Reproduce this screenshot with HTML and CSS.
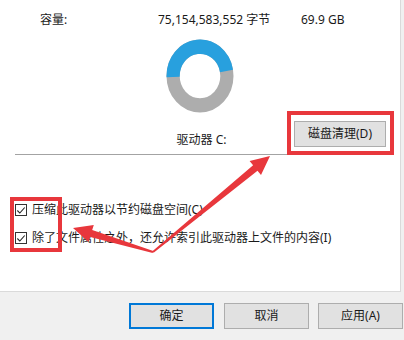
FILE: index.html
```html
<!DOCTYPE html>
<html lang="zh-CN">
<head>
<meta charset="utf-8">
<link rel="stylesheet" href="styles.css">
</head>
<body>
<div class="page">
  <div class="panel">
    <div class="cap">
      <span class="cap-label">容量:</span>
      <span class="cap-bytes">75,154,583,552 字节</span>
      <span class="cap-gb">69.9 GB</span>
    </div>
    <div class="donut">
      <svg width="68" height="74" viewBox="0 0 68 74">
        <g transform="translate(34,37) scale(1,1.09)">
          <circle cx="0" cy="0" r="26.9" fill="none" stroke="#adadad" stroke-width="13.2"/>
          <path d="M -26.88 0.94 A 26.9 26.9 0 0 1 26.49 -4.67" fill="none" stroke="#28a0de" stroke-width="13.2"/>
        </g>
      </svg>
    </div>
    <div class="drive">
      <span class="drive-label">驱动器 C:</span>
      <button class="btn clean">磁盘清理(D)</button>
    </div>
    <div class="sep"></div>
    <div class="checks">
      <label class="check"><span class="box"><svg width="11" height="11" viewBox="0 0 11 11"><path d="M1.5 5.5 L4.2 8.3 L9.6 2.2" fill="none" stroke="#222" stroke-width="1.2"/></svg></span>压缩此驱动器以节约磁盘空间(C)</label>
      <label class="check"><span class="box"><svg width="11" height="11" viewBox="0 0 11 11"><path d="M1.5 5.5 L4.2 8.3 L9.6 2.2" fill="none" stroke="#222" stroke-width="1.2"/></svg></span>除了文件属性之外，还允许索引此驱动器上文件的内容(I)</label>
    </div>
  </div>
  <div class="footer">
    <button class="btn ok">确定</button>
    <button class="btn">取消</button>
    <button class="btn">应用(A)</button>
  </div>

  <div class="mark mark-clean"></div>
  <div class="mark mark-checks"></div>
  <svg class="arrows" width="404" height="340" viewBox="0 0 404 340">
    <polygon fill="#e8373c" points="153.6,252.8 257.5,170.7 261.0,175.0 270,156 249.6,161.0 253.1,165.3 152.4,251.2"/>
    <polygon fill="#e8373c" points="153.3,251.0 92.2,230.1 93.8,224.9 73,228 88.6,242.1 90.2,236.9 152.7,253.0"/>
  </svg>
</div>
</body>
</html>
```
FILE: styles.css
```css
* { box-sizing: border-box; }
html, body {
  margin: 0;
  padding: 0;
  width: 404px;
  height: 340px;
  overflow: hidden;
  background: #f0f0f0;
  font-family: "Noto Sans", "Noto Sans CJK SC", sans-serif;
  font-size: 12px;
  color: #1a1a1a;
}
.page {
  position: relative;
  width: 404px;
  height: 340px;
}
.panel {
  width: 401px;
  height: 292px;
  background: #fff;
  border-right: 1px solid #dadada;
  border-bottom: 1px solid #dadada;
  padding-top: 12px;
}
.cap {
  display: flex;
  height: 16px;
  line-height: 16px;
  padding-left: 40px;
}
.cap-label { width: 118px; }
.cap-bytes { width: 143px; }
.donut {
  display: flex;
  justify-content: center;
  margin-top: 11px;
  padding-right: 1px;
}
.donut svg { display: block; }
.drive {
  display: grid;
  grid-template-columns: 1fr auto 1fr;
  align-items: start;
  height: 41px;
}
.drive-label {
  grid-column: 2;
  margin-top: 19px;
  line-height: 16px;
  padding-left: 3px;
}
.btn {
  font-family: "Noto Sans", "Noto Sans CJK SC", sans-serif;
  font-size: 12px;
  color: #1a1a1a;
  background: #e1e1e1;
  border: 1px solid #adadad;
  width: 85px;
  height: 26px;
  padding: 0;
  margin: 0;
  line-height: 22px;
}
.clean {
  grid-column: 3;
  justify-self: end;
  width: 92px;
  margin-top: 8px;
  margin-right: 14px;
}
.sep {
  margin-left: 15px;
  width: 275px;
  height: 1px;
  background: #a3a3a3;
}
.checks {
  display: flex;
  flex-direction: column;
  gap: 12px;
  padding-left: 15px;
  margin-top: 47px;
}
.check {
  display: flex;
  align-items: center;
  height: 16px;
  line-height: 16px;
  white-space: nowrap;
}
.box {
  width: 12px;
  height: 12px;
  border: 1px solid #333;
  background: #fff;
  margin-right: 5px;
  display: flex;
  align-items: center;
  justify-content: center;
}
.box svg { display: block; }
.footer {
  display: flex;
  gap: 10px;
  padding-left: 129px;
  padding-top: 11px;
}
.footer .btn:nth-child(3) { margin-left: -1px; }
.ok {
  border: 2px solid #0078d7;
}
.mark {
  position: absolute;
  border: 4px solid #e8373c;
}
.mark-clean {
  left: 287px;
  top: 111px;
  width: 107px;
  height: 44px;
}
.mark-checks {
  left: 10px;
  top: 197px;
  width: 52px;
  height: 55px;
}
.arrows {
  position: absolute;
  left: 0;
  top: 0;
  pointer-events: none;
}
```
